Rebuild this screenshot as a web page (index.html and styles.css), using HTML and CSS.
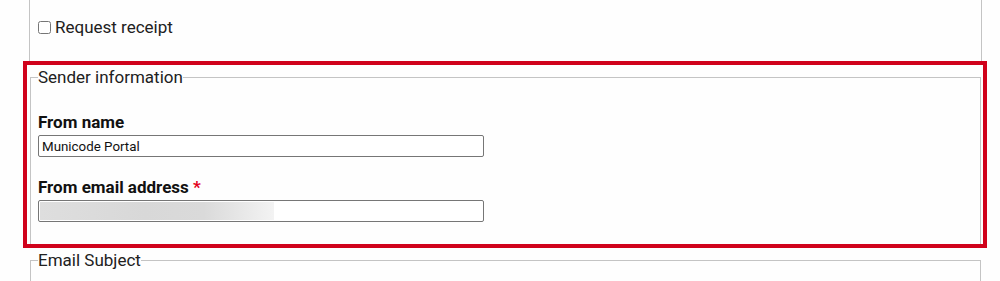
FILE: index.html
```html
<!DOCTYPE html>
<html lang="en">
<head>
    <meta charset="UTF-8">
    <meta name="viewport" content="width=device-width, initial-scale=1.0">
    <title>Notification settings</title>
    <link rel="stylesheet" href="styles.css">
</head>
<body>
    <div class="options">
        <label class="check">
            <input type="checkbox">
            <span>Request receipt</span>
        </label>
    </div>

    <div class="highlight">
        <fieldset class="group">
            <legend>Sender information</legend>
            <div class="field first">
                <label for="fromName">From name</label>
                <input id="fromName" type="text" value="Municode Portal">
            </div>
            <div class="field">
                <label for="fromEmail">From email address <span class="req">*</span></label>
                <div class="input loading">
                    <div class="skeleton"></div>
                </div>
            </div>
        </fieldset>
    </div>

    <fieldset class="group subject">
        <legend>Email Subject</legend>
    </fieldset>
</body>
</html>
```

FILE: styles.css
```css
* {
    box-sizing: border-box;
}

body {
    margin: 0;
    background: #fefefe;
    color: #212121;
    font-family: Roboto, 'Liberation Sans', Arial, sans-serif;
    font-size: 17px;
    line-height: 20px;
    overflow: hidden;
}

.options {
    margin-left: 29px;
    width: 953px;
    height: 61px;
    border-left: 1px solid #c4c4c4;
    border-right: 1px solid #c4c4c4;
    padding: 17px 0 0 8px;
}

.check {
    display: flex;
    align-items: center;
}

.check input {
    width: 13px;
    height: 13px;
    margin: 1px 4px 0 0;
}

.highlight {
    margin-left: 23px;
    width: 964px;
    height: 187px;
    border: 4px solid #d0021b;
    overflow: hidden;
}

.group {
    margin: 2px 0 0 3px;
    width: 951px;
    min-width: 0;
    border: 1px solid #c4c4c4;
    border-bottom: none;
    padding: 0 7px 40px;
}

.group legend {
    padding: 0;
    line-height: 20px;
}

.field {
    margin-top: 20px;
}

.field.first {
    margin-top: 25px;
}

.field label {
    display: block;
    font-weight: 700;
    color: #111;
    margin-bottom: 3px;
}

.req {
    color: #e3001b;
}

.field input,
.input {
    display: block;
    width: 446px;
    height: 22px;
    border: 1px solid #767676;
    border-radius: 2px;
    background: #fff;
    font-family: Roboto, 'Liberation Sans', Arial, sans-serif;
    font-size: 13.33px;
    color: #111;
    padding: 0 3px;
    margin: 0;
}

.input.loading {
    padding: 1px;
}

.skeleton {
    width: 234px;
    height: 18px;
    background: linear-gradient(90deg, #dedede 0%, #d8d8d8 45%, #dadada 70%, #f3f3f3 100%);
}

.subject {
    margin: 2px 0 0 30px;
    height: 60px;
}
```
